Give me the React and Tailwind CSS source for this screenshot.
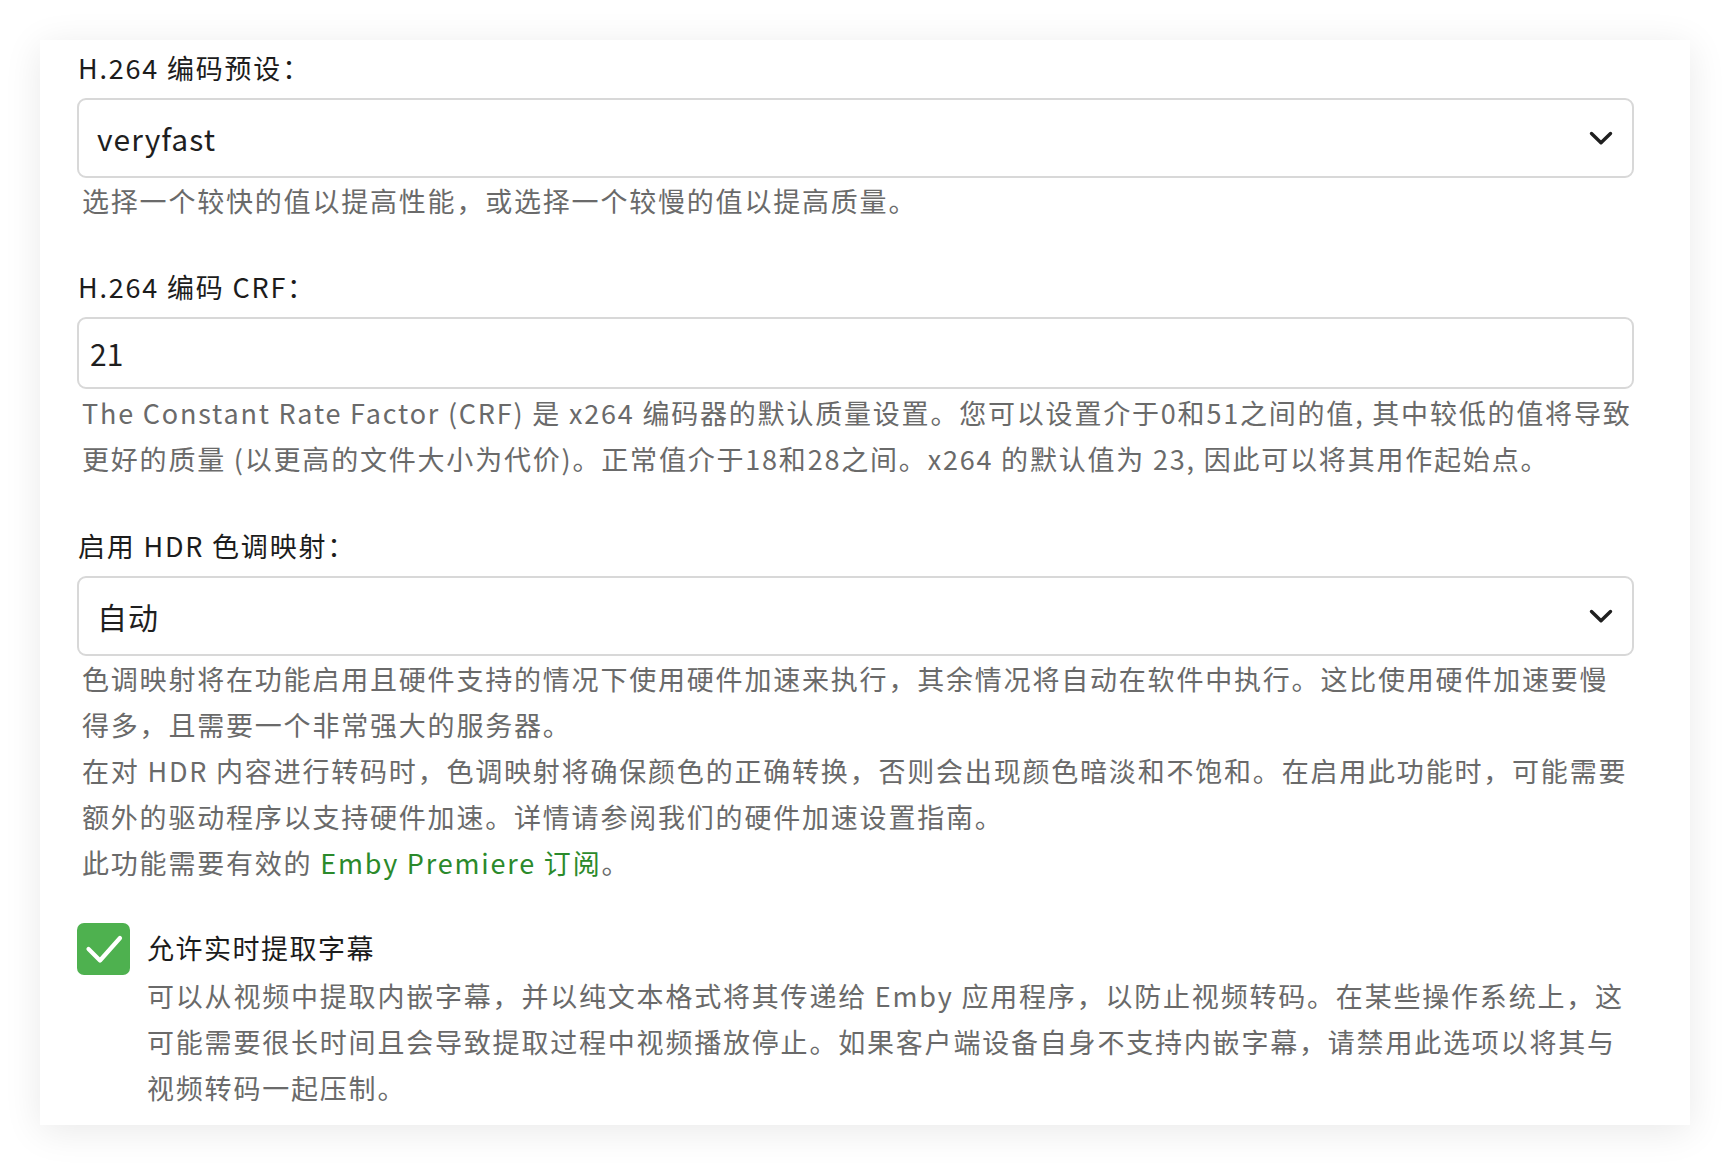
import React from "react";

function Chevron() {
  return (
    <svg width="24" height="15" viewBox="0 0 24 15" fill="none">
      <polyline points="2.5,2.5 12,11.8 21.5,2.5" stroke="#1f1f1f" strokeWidth="3.4" strokeLinecap="round" strokeLinejoin="round" />
    </svg>
  );
}

function Label({ children }) {
  return (
    <div className="pl-[1px] text-[27px] leading-[32px] tracking-[1.8px] text-[#1c1c1c] whitespace-nowrap">
      {children}
    </div>
  );
}

function Help({ lines, className = "" }) {
  return (
    <div className={"text-[27px] leading-[46px] tracking-[1.8px] text-[#6a6a6a] whitespace-nowrap " + className}>
      {lines.map((l, i) => (
        <div key={i}>{l}</div>
      ))}
    </div>
  );
}

function Select({ value }) {
  return (
    <div className="h-[80px] border-2 border-[#d8d8d8] rounded-[9px] flex items-center justify-between pl-[18px] pr-[19px] bg-white">
      <span className="text-[30px] tracking-[1px] text-[#1f1f1f]">{value}</span>
      <Chevron />
    </div>
  );
}

export default function App() {
  return (
    <div className="w-[1730px] h-[1166px] bg-white pt-[40px] pl-[40px] font-['Noto_Sans_CJK_SC',sans-serif]">
      <div className="w-[1650px] h-[1085px] bg-white shadow-[0_6px_36px_rgba(0,0,0,0.09)] pl-[37px] pr-[56px] pt-[12px]">
        <Label>H.264 编码预设：</Label>
        <div className="mt-[14px]">
          <Select value="veryfast" />
        </div>
        <Help className="pl-[5px]" lines={["选择一个较快的值以提高性能，或选择一个较慢的值以提高质量。"]} />

        <div className="mt-[47px]">
          <Label>H.264 编码 CRF：</Label>
        </div>
        <div className="mt-[14px] h-[72px] border-2 border-[#d8d8d8] rounded-[9px] flex items-center pl-[11px] bg-white">
          <span className="text-[30px] tracking-[0px] text-[#1f1f1f]">21</span>
        </div>
        <Help
          className="pl-[5px] mt-[1px]"
          lines={[
            "The Constant Rate Factor (CRF) 是 x264 编码器的默认质量设置。您可以设置介于0和51之间的值, 其中较低的值将导致",
            "更好的质量 (以更高的文件大小为代价)。正常值介于18和28之间。x264 的默认值为 23, 因此可以将其用作起始点。",
          ]}
        />

        <div className="mt-[48px]">
          <Label>启用 HDR 色调映射：</Label>
        </div>
        <div className="mt-[14px]">
          <Select value="自动" />
        </div>
        <Help
          className="pl-[5px]"
          lines={[
            "色调映射将在功能启用且硬件支持的情况下使用硬件加速来执行，其余情况将自动在软件中执行。这比使用硬件加速要慢",
            "得多，且需要一个非常强大的服务器。",
            "在对 HDR 内容进行转码时，色调映射将确保颜色的正确转换，否则会出现颜色暗淡和不饱和。在启用此功能时，可能需要",
            "额外的驱动程序以支持硬件加速。详情请参阅我们的硬件加速设置指南。",
            <>
              此功能需要有效的 <span className="text-[#2b8a2b]">Emby Premiere 订阅</span>。
            </>,
          ]}
        />

        <div className="mt-[37px] flex items-start gap-[17px]">
          <div className="w-[53px] h-[52px] rounded-[7px] bg-[#4eb14f] flex items-center justify-center shrink-0">
            <svg width="53" height="52" viewBox="0 0 53 52" fill="none">
              <polyline points="11.5,26 23,37.5 43,15" stroke="#ffffff" strokeWidth="4.2" strokeLinecap="round" strokeLinejoin="round" />
            </svg>
          </div>
          <div>
            <div className="text-[27px] leading-[50px] tracking-[1.5px] text-[#1c1c1c] whitespace-nowrap">允许实时提取字幕</div>
            <Help
              lines={[
                "可以从视频中提取内嵌字幕，并以纯文本格式将其传递给 Emby 应用程序，以防止视频转码。在某些操作系统上，这",
                "可能需要很长时间且会导致提取过程中视频播放停止。如果客户端设备自身不支持内嵌字幕，请禁用此选项以将其与",
                "视频转码一起压制。",
              ]}
            />
          </div>
        </div>
      </div>
    </div>
  );
}
